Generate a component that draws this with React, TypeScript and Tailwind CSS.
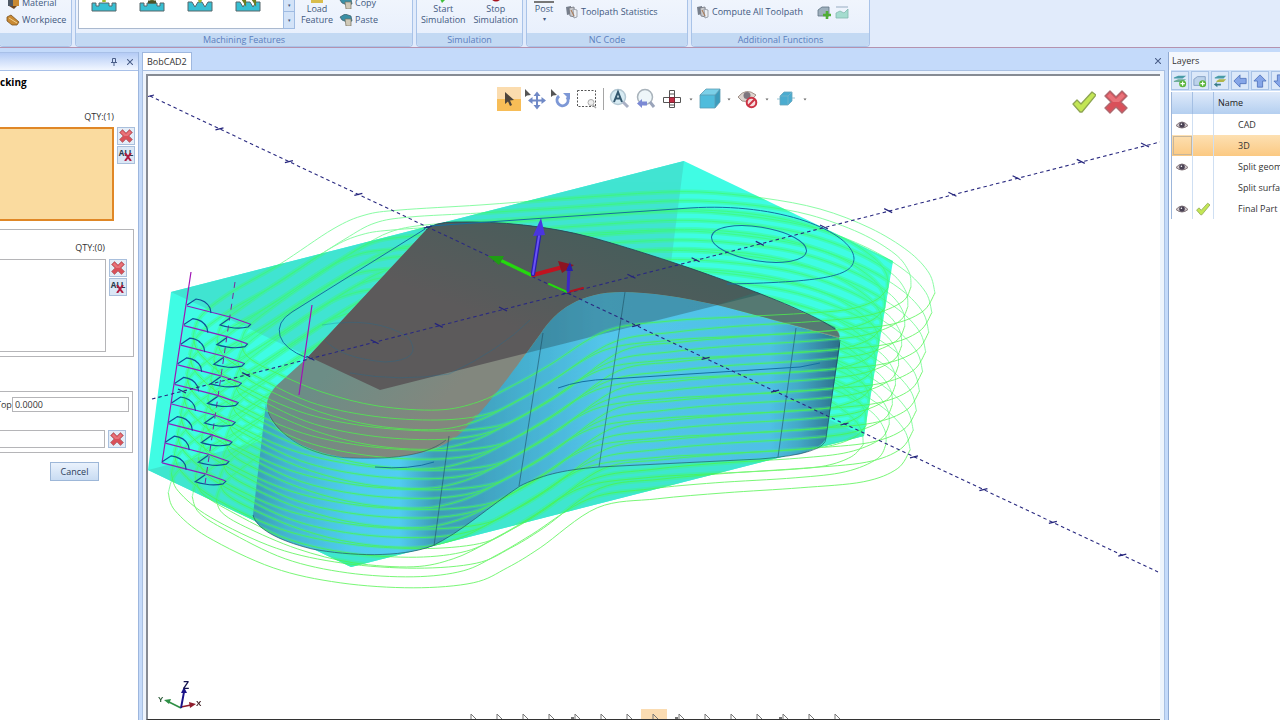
import React from 'react';

type Pt = [number, number];

interface Layer {
  name: string;
  visible: boolean;
  active: boolean;
  selected?: boolean;
}

const LAYERS: Layer[] = [
  { name: 'CAD', visible: true, active: false },
  { name: '3D', visible: false, active: false, selected: true },
  { name: 'Split geometry', visible: true, active: false },
  { name: 'Split surface', visible: false, active: false },
  { name: 'Final Part', visible: true, active: true },
];

// Profile passes at the top level, outermost first. Each has a far and a near half.
const PASSES: { back: Pt[]; front: Pt[] }[] = [
  {
    back: [[193, 336], [201, 316], [230, 293], [280, 264], [333, 229], [365, 215], [400, 210], [480, 205], [560, 199], [647, 193], [700, 192], [763, 198], [820, 209], [870, 228], [908, 251], [929, 273], [935, 293]],
    front: [[935, 293], [922, 312], [888, 325], [825, 331], [750, 336], [682, 342], [622, 351], [565, 391], [532, 411], [498, 426], [438, 431], [365, 426], [298, 411], [232, 380], [200, 354], [193, 336]],
  },
  {
    back: [[217, 340], [224, 322], [252, 300], [300, 268], [345, 239], [375, 223], [410, 217], [480, 213], [560, 208], [647, 202], [700, 201], [760, 206], [810, 215], [860, 233], [895, 254], [909, 272], [911, 287]],
    front: [[911, 287], [902, 302], [870, 315], [820, 321], [740, 326], [676, 332], [614, 342], [556, 378], [522, 398], [488, 414], [438, 420], [372, 416], [310, 402], [252, 374], [224, 356], [217, 340]],
  },
  {
    back: [[241, 343], [248, 327], [274, 306], [320, 274], [360, 248], [390, 232], [425, 225], [490, 221], [560, 216], [647, 211], [700, 210], [752, 214], [800, 223], [845, 239], [874, 258], [886, 273], [888, 288]],
    front: [[888, 288], [876, 300], [850, 309], [810, 313], [735, 317], [670, 321], [606, 331], [548, 366], [512, 386], [478, 402], [438, 410], [378, 406], [322, 392], [270, 370], [247, 356], [241, 343]],
  },
];

const LEVELS = Array.from({ length: 9 }, (_, i) => i);

// Catmull-Rom through the points, written as cubic segments
const smooth = (pts: Pt[]) => {
  let d = `M${pts[0][0]} ${pts[0][1]}`;
  for (let i = 0; i < pts.length - 1; i++) {
    const a = pts[i - 1] || pts[i];
    const b = pts[i];
    const c = pts[i + 1];
    const e = pts[i + 2] || c;
    d += ` C${b[0] + (c[0] - a[0]) / 6} ${b[1] + (c[1] - a[1]) / 6} ${c[0] - (e[0] - b[0]) / 6} ${c[1] - (e[1] - b[1]) / 6} ${c[0]} ${c[1]}`;
  }
  return d;
};

const STOCK = 'M684 161 L893 261 L864 436 L351 567 L148 470 L171 292 Z';
const PART_TOP =
  'M307 358 L426 230 Q434 222 455 222 C500 221 548 226 590 237 C660 256 800 304 835 329 Q841 333 839 338 C790 325 750 313 717 305 C680 297 650 292 622 292 C580 292 556 310 541 333 C520 362 490 404 462 432 C438 454 404 459 352 458 C314 455 284 439 272 421 C263 406 267 397 276 386 Z';
const PART_SIDE =
  'M266 403 C268 425 284 439 314 451 C346 462 404 459 436 449 C452 442 490 404 541 333 C556 310 580 292 622 292 C650 292 680 297 717 305 L839 338 L840 345 L826 438 Q822 448 800 454 C780 458 700 462 599 467 C560 470 540 476 520 486 C490 506 460 533 432 546 C400 558 350 556 312 549 C276 540 256 528 253 515 Z';

const Toolpaths: React.FC<{ half: 'back' | 'front' }> = ({ half }) => (
  <>
    {LEVELS.map((k) => (
      <g key={k} transform={`translate(${-3.1 * k} ${19.6 * k})`}>
        {PASSES.map((p, i) => (
          <path key={i} d={smooth(p[half])} />
        ))}
      </g>
    ))}
  </>
);

const AxisTicks: React.FC<{ from: Pt; step: Pt; count: number; dy: number }> = ({ from, step, count, dy }) => (
  <g stroke="#24247c" strokeWidth="1.2">
    {Array.from({ length: count }, (_, i) => {
      const x = from[0] + step[0] * i;
      const y = from[1] + step[1] * i;
      return <line key={i} x1={x - 4} y1={y - dy} x2={x + 4} y2={y + dy} />;
    })}
  </g>
);

const Viewport: React.FC = () => (
  <svg className="h-full w-full" viewBox="148 76 1012 643" role="img" aria-label="Part and toolpath view">
    <defs>
      <linearGradient id="side" gradientUnits="userSpaceOnUse" x1="252" y1="0" x2="840" y2="0">
        <stop offset="0" stopColor="#3a9cb4" />
        <stop offset="0.06" stopColor="#45b4d4" />
        <stop offset="0.17" stopColor="#50ccf0" />
        <stop offset="0.25" stopColor="#52cdf2" />
        <stop offset="0.31" stopColor="#3f9cb8" />
        <stop offset="0.37" stopColor="#3fa0bc" />
        <stop offset="0.48" stopColor="#48b3d4" />
        <stop offset="0.6" stopColor="#54c6ec" />
        <stop offset="0.88" stopColor="#50c0e6" />
        <stop offset="0.93" stopColor="#44a8c8" />
        <stop offset="1" stopColor="#2c6f88" />
      </linearGradient>
      <linearGradient id="top" gradientUnits="userSpaceOnUse" x1="560" y1="225" x2="520" y2="330">
        <stop offset="0" stopColor="#485d5b" />
        <stop offset="1" stopColor="#5c5a5b" />
      </linearGradient>
      <linearGradient id="lowTop" gradientUnits="userSpaceOnUse" x1="320" y1="380" x2="400" y2="450">
        <stop offset="0" stopColor="#6c8d86" />
        <stop offset="1" stopColor="#82877e" />
      </linearGradient>
      <clipPath id="stock"><path d={STOCK} /></clipPath>
      <clipPath id="partTop"><path d={PART_TOP} /></clipPath>
      <clipPath id="partSide"><path d={PART_SIDE} /></clipPath>
    </defs>

    {/* stock */}
    <path d={STOCK} fill="#40fce4" />
    <path d="M171 292 L684 161 L664 318 L380 390 Z" fill="#41e4d2" />
    <path d="M148 470 L661 339 L864 436 L351 567 Z" fill="#3fe6cf" />
    <g fill="none" stroke="#3dfb6a">
      <g strokeWidth="4.5" opacity="0.35" clipPath="url(#stock)">
        <Toolpaths half="back" />
        <Toolpaths half="front" />
      </g>
      <g strokeWidth="1" opacity="0.6">
        <Toolpaths half="back" />
      </g>
    </g>

    {/* part */}
    <path d={PART_SIDE} fill="url(#side)" />
    <path d="M380 390 L893 261 L700 200 L400 250 Z" fill="#2f5e6b" opacity="0.45" clipPath="url(#partSide)" />
    <path d={PART_TOP} fill="url(#lowTop)" />
    <path d="M171 292 L684 161 L893 261 L380 390 Z" fill="url(#top)" clipPath="url(#partTop)" />
    <path d="M757 292 L835 327 L840 337 L717 305 Z" fill="#37706a" opacity="0.6" />
    <g fill="none" stroke="#3cf58a" strokeWidth="3.5" opacity="0.3" clipPath="url(#partSide)">
      <Toolpaths half="front" />
    </g>
    <g fill="none" stroke="#4df54a" strokeWidth="1" opacity="0.75">
      <Toolpaths half="front" />
    </g>

    <g fill="none" stroke="#1b4a5c" strokeWidth="1" opacity="0.8">
      <path d="M449 436 L434 546 M543 333 L519 486 M625 292 L599 467 M796 328 L778 457" opacity="0.7" />
      <path d="M268 412 C278 436 310 457 352 458 C400 460 430 453 446 440" opacity="0.6" />
      <path d="M253 515 C256 528 276 540 312 549 C350 556 400 558 432 546 C460 533 490 506 520 486 C540 476 560 470 599 467 L760 459 Q826 454 826 438 L840 340" opacity="0.8" />
      <path d="M426 230 Q434 222 455 222 C500 221 548 226 590 237 C660 256 800 304 835 329" />
    </g>
    <g fill="none" stroke="#1470a0" strokeWidth="1">
      <path d="M425 229 L292 312 Q276 322 280 336 Q284 349 307 358" />
      <path d="M430 226 L690 208 C780 202 852 232 854 258 C854 274 834 282 727 284" />
      <ellipse cx="759" cy="244" rx="48" ry="17" transform="rotate(9 759 244)" />
      <path d="M375 467 Q410 470 434 462 M558 388 Q580 380 610 379 L800 367 L820 363" />
      <path d="M322 325 Q375 316 408 337 Q425 360 385 362 Q340 358 325 340 M350 373 Q400 382 449 374 Q500 350 530 320" opacity="0.3" />
    </g>

    {/* lead in / lead out moves */}
    <g fill="none" strokeWidth="1.2">
      <path d="M191 272 L162 463 M312 305 L299 395" stroke="#a014b4" />
      <path d="M235 282 L205 484" stroke="#7a2a9a" strokeWidth="1" strokeDasharray="6 5" />
      {LEVELS.map((i) => (
        <g key={i} transform={`translate(${-3.1 * i} ${19.6 * i})`}>
          <path d="M187 306 L230 317 L250 324" stroke="#8a1fc0" />
          <path d="M187 305 L196 299 Q206 300 210 308 L211 313 M230 318 L220 325 Q236 330 248 327 L251 324" stroke="#114f96" />
        </g>
      ))}
    </g>

    {/* world axes */}
    <g stroke="#2a2a80" strokeWidth="1.1" strokeDasharray="3.5 3">
      <line x1="150" y1="96" x2="1158" y2="572" />
      <line x1="152" y1="399" x2="1160" y2="142" />
    </g>
    <AxisTicks from={[150, 96]} step={[69.45, 32.8]} count={15} dy={-1} />
    <AxisTicks from={[182, 391]} step={[64.2, -16.4]} count={16} dy={2} />

    <g strokeLinecap="round">
      <line x1="531" y1="275" x2="502" y2="261" stroke="#25d80f" strokeWidth="3.5" />
      <path d="M488 256 L504 256 L499 265 Z" fill="#1f9d14" />
      <line x1="533" y1="275" x2="563" y2="267" stroke="#c01320" strokeWidth="4" />
      <path d="M574 265 L558 261 L562 273 Z" fill="#8e1420" />
      <line x1="533" y1="274" x2="539" y2="236" stroke="#2a1fb0" strokeWidth="4.500" />
      <line x1="533" y1="274" x2="539" y2="236" stroke="#6a52f5" strokeWidth="2" />
      <path d="M541 218 L533 236 L545 235 Z" fill="#4a35e0" />
      <line x1="567" y1="292" x2="549" y2="284" stroke="#25d80f" strokeWidth="2" />
      <line x1="568" y1="292" x2="583" y2="288" stroke="#b01320" strokeWidth="2" />
      <line x1="568" y1="291" x2="569" y2="268" stroke="#3b27c8" strokeWidth="3" />
      <path d="M570 262 L566 271 L573 271 Z" fill="#2a1fa8" />
    </g>

    {/* view triad */}
    <g strokeWidth="1.6">
      <line x1="181" y1="708" x2="167" y2="701" stroke="#2f8f46" />
      <path d="M164 700 L171 699 L169 704 Z" fill="#2f8f46" />
      <line x1="181" y1="707" x2="191" y2="705" stroke="#8f1c2c" />
      <path d="M196 704 L189 702 L190 708 Z" fill="#8f1c2c" />
      <line x1="181" y1="708" x2="184" y2="692" stroke="#1a1288" strokeWidth="2" />
      <path d="M184 687 L181 693 L187 693 Z" fill="#1a1288" />
    </g>
    <g fontFamily="Liberation Sans, sans-serif" fontWeight="700">
      <text x="183" y="689" fontSize="10" fill="#141450">Z</text>
      <text x="158" y="702" fontSize="8" fill="#2c5a38">Y</text>
      <text x="196" y="706" fontSize="8" fill="#3c1c20">X</text>
    </g>
  </svg>
);

const RedX: React.FC<{ className?: string }> = ({ className = 'size-3.5' }) => (
  <svg viewBox="0 0 24 24" className={className}>
    <path d="M6 1 L12 7 L18 1 L23 6 L17 12 L23 18 L18 23 L12 17 L6 23 L1 18 L7 12 L1 6 Z" fill="#d9505a" stroke="#ad6a70" strokeWidth="1.4" strokeLinejoin="round" />
    <path d="M6 3 L12 9 L18 3 L21 6 L15 12 H9 L3 6 Z" fill="#ee8288" opacity="0.7" />
  </svg>
);

const Check: React.FC<{ className?: string }> = ({ className = 'size-3.5' }) => (
  <svg viewBox="0 0 24 24" className={className}>
    <path d="M1 14 L5 10 L9 14 L20 2 L24 5 L10 22 H8 Z" fill="#c3e655" stroke="#8ea552" strokeWidth="1.3" strokeLinejoin="round" />
  </svg>
);

const Eye: React.FC = () => (
  <svg viewBox="0 0 14 10" className="h-2.5 w-3.5">
    <path d="M1 5.500 Q7 -1.500 13 5.500 Q7 10.500 1 5.500 Z" fill="#cfc6ca" stroke="#85777c" />
    <circle cx="7" cy="5" r="2.8" fill="#4a4254" />
    <circle cx="6.400" cy="4.200" r="0.8" fill="#fff" />
  </svg>
);

const RemoveButton: React.FC = () => (
  <button aria-label="Remove" className="flex size-[18px] items-center justify-center border border-[#a9bfdc] bg-[#e4edf8]">
    <RedX />
  </button>
);

const RemoveAllButton: React.FC = () => (
  <button aria-label="Remove all" className="relative flex size-[18px] justify-center border border-[#a9bfdc] bg-[#dbe7f5] text-[8px] leading-[11px] font-bold text-[#2a3a4c]">
    ALL
    <svg viewBox="0 0 8 8" className="absolute right-0.5 bottom-0.5 size-2">
      <path d="M1 0 L7 8 M7 0 L1 8" stroke="#b01c40" strokeWidth="2" />
    </svg>
  </button>
);

const SheetsIcon: React.FC = () => (
  <svg viewBox="0 0 14 14" className="size-3.5 shrink-0">
    <path d="M1 2 L6 1 V9 L2 10 Z" fill="#777f8c" />
    <path d="M4 3 L9 2 L10 12 L5 11 Z" fill="#c9c9cc" stroke="#70747c" strokeWidth="0.8" />
    <path d="M8 4 L12 5 L12 12 L9 13 Z" fill="#eceef2" stroke="#8d939c" strokeWidth="0.8" />
    <path d="M6 5 L9 11" stroke="#a8744c" />
  </svg>
);

const PasteIcon: React.FC = () => (
  <svg viewBox="0 0 14 12" className="h-3 w-3.5 shrink-0">
    <path d="M1 3 L6 0 L12 2 L13 7 L8 8 L3 6 Z" fill="#3a8fa5" stroke="#3b5a66" strokeWidth="0.7" />
    <path d="M6 5 H12 V12 H7 Z" fill="#cfc9b8" stroke="#75705f" strokeWidth="0.7" />
  </svg>
);

const WorkIcon: React.FC = () => (
  <svg viewBox="0 0 14 12" className="h-3 w-3.5 shrink-0">
    <path d="M1 3 L5 1 L13 8 L11 11 L6 11 L1 7 Z" fill="#c98a34" stroke="#7a5220" strokeWidth="0.8" />
    <path d="M3 4 L11 9" stroke="#f1cf8e" />
  </svg>
);

const MaterialIcon: React.FC = () => (
  <svg viewBox="0 0 14 12" className="h-3 w-3.5 shrink-0">
    <rect x="2" y="2" width="6" height="7" fill="#4e5866" />
    <rect x="7" y="3" width="6" height="6" fill="#c98a34" />
    <path d="M3 9 H11 L8 12 Z" fill="#6d4624" />
  </svg>
);

const FeatureIcon: React.FC<{ kind: number }> = ({ kind }) => (
  <svg viewBox="0 0 26 24" className="h-6 w-[26px]">
    <path
      d={kind > 1 ? 'M1 14 H5 L8 19 L11 14 H15 L18 19 L21 14 H25 V23 H1 Z' : 'M1 15 H5 V18 H8 V15 H18 V18 H21 V15 H25 V23 H1 Z'}
      fill="#36bfd3"
      stroke="#56666a"
    />
    {kind === 3 ? (
      <path d="M8 0 V12 L10 15 V6 M18 0 V12 L20 15 V4" stroke="#6c7c20" strokeWidth="2.2" fill="none" />
    ) : (
      <path d={kind === 2 ? 'M13 0 V8 M11 9 L13 12 L15 9 Z' : 'M13 0 V14'} stroke={kind === 1 ? '#75803a' : '#a0b82a'} strokeWidth="3.5" />
    )}
    {kind === 1 && <path d="M9 14 H17" stroke="#4c5228" strokeWidth="3" />}
  </svg>
);

const RibbonGroup: React.FC<{ label: string; className: string; children: React.ReactNode }> = ({ label, className, children }) => (
  <section className={`flex shrink-0 flex-col overflow-hidden rounded-b-sm border-x border-b border-[#a9c3e8] bg-linear-to-b from-[#f0f5fd] to-[#e6eefc] ${className}`}>
    <div className="flex h-[33px] items-end justify-between overflow-hidden">{children}</div>
    <h2 className="flex h-[13px] items-center justify-center bg-[#c3d9f3] text-[#5b7fbe]">{label}</h2>
  </section>
);

const Ribbon: React.FC = () => (
  <header className="flex h-12 shrink-0 gap-[3px] overflow-hidden border-b border-[#b592ae] bg-[#e1ebfb] text-[#42597f]">
    <RibbonGroup label="" className="-ml-px w-[73px]">
      <div className="flex flex-col items-start gap-[3px] pb-[6px] pl-1.5">
        <button className="flex h-3.5 items-center gap-0.5"><MaterialIcon />Material</button>
        <button className="flex h-3.5 items-center gap-0.5"><WorkIcon />Workpiece</button>
      </div>
    </RibbonGroup>
    <RibbonGroup label="Machining Features" className="w-[338px]">
      <div className="flex h-full pb-1 pl-0.5">
        <div className="flex w-[205px] items-start gap-[22px] border-b border-l border-[#aab9cf] bg-white pl-3">
          {[0, 1, 2, 3].map((k) => (
            <button key={k} aria-label={`Feature ${k + 1}`} className="-mt-3"><FeatureIcon kind={k} /></button>
          ))}
        </div>
        <div className="flex w-3 flex-col border border-t-0 border-[#9fbbe2] bg-[#d3e3f8] text-[5px] leading-none">
          <button aria-label="Next row" className="h-3 border-b border-[#9fbbe2]">▾</button>
          <button aria-label="More features" className="flex-1">▾</button>
        </div>
      </div>
      <button className="flex flex-col pb-2 text-center leading-[11px]">
        <span className="mx-auto h-1 w-3 bg-[#d9bd4c]" />
        <span>Load</span>
        <span>Feature</span>
      </button>
      <div className="flex flex-col items-start gap-[3px] pr-[34px] pb-1.5">
        <button className="flex h-3.5 items-center gap-0.5"><PasteIcon />Copy</button>
        <button className="flex h-3.5 items-center gap-0.5"><PasteIcon />Paste</button>
      </div>
    </RibbonGroup>
    <RibbonGroup label="Simulation" className="w-[107px]">
      <button className="flex flex-1 flex-col items-center pb-2 leading-[11px]">
        <svg viewBox="0 0 8 4" className="h-1 w-2"><path d="M1 0 H7 L3 4 Z" fill="#3fbf3a" /></svg>
        Start<span>Simulation</span>
      </button>
      <button className="flex flex-1 flex-col items-center pb-2 leading-[11px]">
        <svg viewBox="0 0 10 4" className="h-1 w-2.5"><path d="M0 0 H10 Q5 5 0 0 Z" fill="#a5121e" /></svg>
        Stop<span>Simulation</span>
      </button>
    </RibbonGroup>
    <RibbonGroup label="NC Code" className="w-[162px]">
      <button className="flex w-[34px] flex-col items-center pb-2 leading-[11px]">
        <span className="h-0.5 w-5 bg-[#777]" />
        Post<span className="text-[6px]">▾</span>
      </button>
      <button className="mr-auto flex items-center gap-0.5 pb-3.5 pl-1"><SheetsIcon />Toolpath Statistics</button>
    </RibbonGroup>
    <RibbonGroup label="Additional Functions" className="w-[179px]">
      <button className="flex items-center gap-0.5 pb-3.5 pl-1"><SheetsIcon />Compute All Toolpath</button>
      <div className="flex gap-1 pr-5 pb-3.5">
        <button aria-label="Add toolpath">
          <svg viewBox="0 0 14 14" className="size-3.5">
            <path d="M1 5 L5 2 H12 V11 H1 Z" fill="#9eb0bd" stroke="#607483" strokeWidth="0.8" />
            <path d="M10 6 V14 M6 10 H14" stroke="#4fae35" strokeWidth="2.6" />
          </svg>
        </button>
        <button aria-label="Report">
          <svg viewBox="0 0 14 14" className="size-3.5">
            <path d="M1 2 H13" stroke="#98adc2" />
            <path d="M1 13 V8 L5 6 L9 8 L13 4 V13 Z" fill="#a4dccf" stroke="#84b8ae" strokeWidth="0.8" />
          </svg>
        </button>
      </div>
    </RibbonGroup>
  </header>
);

const ParameterPanel: React.FC = () => (
  <aside className="flex w-[139px] shrink-0 flex-col overflow-hidden border-r border-[#9db6dd] bg-white text-[#333]">
    <div className="flex h-[19px] shrink-0 items-center justify-end gap-1 border-t border-b border-[#a8c0e8] bg-linear-to-b from-[#b4cbf5] to-[#f2f7ff] pr-0.5 text-[#4a5e88]">
      <button aria-label="Pin" className="flex size-3 items-center justify-center">
        <svg viewBox="0 0 8 8" className="size-2" fill="none" stroke="currentColor">
          <path d="M2.500 0.500 H5.500 V4.500 H2.500 Z M1 4.500 H7 M4 4.500 V8" />
        </svg>
      </button>
      <button aria-label="Close panel" className="flex size-3 items-center justify-center">
        <svg viewBox="0 0 8 8" className="size-1.5" stroke="currentColor" strokeWidth="1.4"><path d="M0 0 L8 8 M8 0 L0 8" /></svg>
      </button>
    </div>
    <h1 className="mt-1 text-[10px] leading-3.5 font-bold text-black">cking</h1>
    <p className="mt-[22px] pr-6 text-right leading-3">QTY:(1)</p>
    <div className="mt-1 flex gap-[3px]">
      <div className="h-[94px] w-[114px] border-2 border-l-0 border-[#e08726] bg-[#fadb9f]" />
      <div className="flex flex-col gap-px">
        <RemoveButton />
        <RemoveAllButton />
      </div>
    </div>
    <section className="mt-2 mr-1 h-[128px] border border-l-0 border-[#b5b5b8]">
      <p className="mt-3 pr-[28px] text-right leading-3">QTY:(0)</p>
      <div className="mt-[5px] flex gap-[3px]">
        <div className="h-[93px] w-[106px] border border-l-0 border-[#b5b5b8]" />
        <div className="flex flex-col gap-px">
          <RemoveButton />
          <RemoveAllButton />
        </div>
      </div>
    </section>
    <section className="mt-[34px] mr-[5px] h-[62px] border border-l-0 border-[#b5b5b8] pr-[3px]">
      <label className="mt-[5px] flex h-[15px] items-center">
        <span className="-ml-1">Top</span>
        <input type="text" defaultValue="0.0000" className="h-[15px] w-0 min-w-0 flex-1 border border-[#b5b5b8] px-0.5" />
      </label>
      <div className="mt-[18px] flex gap-[3px]">
        <input type="text" aria-label="Bottom geometry" className="h-[18px] w-[105px] border border-l-0 border-[#b5b5b8]" />
        <RemoveButton />
      </div>
    </section>
    <button className="mt-[9px] mr-[39px] h-[19px] w-[49px] self-end border border-[#9db7d8] bg-linear-to-b from-[#eaf2fc] to-[#c9dcf3] text-[#2c3c58]">Cancel</button>
  </aside>
);

const Tool: React.FC<{ label: string; active?: boolean; children: React.ReactNode }> = ({ label, active, children }) => (
  <button aria-label={label} className={`flex size-6 items-center justify-center ${active ? 'bg-linear-to-b from-[#fbdcae] from-50% to-[#f7bd57] to-50%' : ''}`}>
    <svg viewBox="0 0 24 24" className="size-6" fill="none">{children}</svg>
  </button>
);

const Drop: React.FC<{ label: string }> = ({ label }) => (
  <button aria-label={label} className="flex h-6 w-2.5 items-center justify-center">
    <svg viewBox="0 0 4 3" className="h-[3px] w-1"><path d="M0.500 0.500 H3.500 L2 2.500 Z" fill="#666" /></svg>
  </button>
);

const ViewToolbar: React.FC = () => (
  <div className="absolute inset-x-0 top-[11px] flex justify-center gap-0.5 pr-0.5">
    <Tool label="Select" active>
      <path d="M8 5 L8 17 L11 14.500 L13 19 L15 18 L13 13.500 L17 13 Z" fill="#4d443c" />
    </Tool>
    <Tool label="Pan">
      <path d="M2 2 L2 10 L4 8.500 L8 8 Z" fill="#555" />
      <path d="M14 7 V20 M7.500 13.500 H20.500" stroke="#7089c6" strokeWidth="2" />
      <path d="M14 4.500 L17.500 9 H10.500 Z M14 22.500 L17.500 18 H10.500 Z M5 13.500 L9.500 10 V17 Z M23 13.500 L18.500 10 V17 Z" fill="#7089c6" />
    </Tool>
    <Tool label="Rotate">
      <path d="M2 2 L2 10 L4 8.500 L8 8 Z" fill="#555" />
      <path d="M10 9 A5.500 5.500 0 1 0 18 10" stroke="#7d98d6" strokeWidth="3" />
      <path d="M14 6 H21 V13 Z" fill="#7d98d6" />
    </Tool>
    <Tool label="Window select">
      <rect x="2.500" y="3.500" width="18" height="16" stroke="#555" strokeDasharray="2 1.500" />
      <circle cx="16" cy="15.500" r="3" stroke="#aaa" fill="#eee" />
      <path d="M18 18 L21 21" stroke="#aaa" strokeWidth="1.500" />
    </Tool>
    <span className="mx-0.5 h-[22px] w-px self-center bg-[#a5a5a5]" />
    <Tool label="Zoom all">
      <circle cx="10" cy="10" r="7.500" fill="#d7ebf3" stroke="#b5c9d4" strokeWidth="1.500" />
      <path d="M15 15 L20 20" stroke="#a9b0c4" strokeWidth="3" />
      <path d="M6 15 L10 5 L14 15 M7.500 11.500 H12.500" stroke="#33576e" strokeWidth="2" />
    </Tool>
    <Tool label="Zoom previous">
      <circle cx="11" cy="10" r="7.500" fill="#eef6f9" stroke="#a9b3bb" strokeWidth="1.500" />
      <path d="M16 15 L20 20" stroke="#9aa4ba" strokeWidth="3" />
      <path d="M3 16.500 L8 12 V14.500 H13 V18.500 H8 V21 Z" fill="#7b89d4" />
    </Tool>
    <Tool label="Standard views">
      <path d="M9.500 3.500 H14.500 V20.500 H9.500 Z M3.500 10.500 H20.500 V15.500 H3.500 Z" stroke="#555" fill="#fff" />
      <rect x="9.500" y="10.500" width="5" height="5" fill="#c22d45" stroke="#7b2634" />
      <path d="M9.500 7 H14.500 M9.500 18 H14.500" stroke="#555" />
    </Tool>
    <Drop label="Standard views menu" />
    <Tool label="Shading">
      <path d="M2 8 L8 2 H22 L17 8 Z" fill="#7bd0e8" />
      <path d="M2 8 H17 V21 H2 Z" fill="#4fbcdc" />
      <path d="M17 8 L22 2 V15 L17 21 Z" fill="#3c9cbc" />
      <path d="M2 8 L8 2 H22 V15 L17 21 H2 Z M2 8 H17 V21 M17 8 L22 2" stroke="#5a9cb4" strokeWidth="0.8" />
    </Tool>
    <Drop label="Shading menu" />
    <Tool label="Hide">
      <path d="M2 10 Q10 0 20 8 Q14 16 6 14 Z" fill="#ddd4cf" stroke="#a09088" />
      <circle cx="11" cy="8.500" r="3.500" fill="#7d767e" />
      <circle cx="15.500" cy="15.500" r="4.800" stroke="#cc3344" strokeWidth="2" fill="#f6dede" />
      <path d="M12 19 L19 12" stroke="#cc3344" strokeWidth="2" />
    </Tool>
    <Drop label="Hide menu" />
    <Tool label="Clipping">
      <path d="M6 9 L10 5 H18 V14 L14 18 H6 Z" fill="#4bacd0" stroke="#6aa5bb" strokeWidth="0.8" />
      <path d="M6 9 H14 L18 5 M14 9 V18 M3 12 H6 M18 11 H21" stroke="#7ab5ca" strokeWidth="0.8" />
    </Tool>
    <Drop label="Clipping menu" />
  </div>
);

const SnapBar: React.FC = () => (
  <div className="absolute inset-x-0 bottom-0 flex h-2.5 justify-center">
    {Array.from({ length: 15 }, (_, i) => (
      <button key={i} aria-label={`Snap ${i + 1}`} className={`flex w-[26px] items-end justify-center ${i === 7 ? 'bg-[#fbdcb2]' : ''}`}>
        <svg viewBox="0 0 12 5" className="h-[5px] w-3" fill="none" stroke="#777">
          <path d="M5 5 V0 L10 5" />
          {i % 4 === 0 && i > 0 && <path d="M1 4 H4" stroke="#444" strokeWidth="1.500" />}
        </svg>
      </button>
    ))}
  </div>
);

const DocumentArea: React.FC = () => (
  <main className="ml-[3px] flex min-w-0 flex-1 flex-col">
    <div className="flex h-[18px] shrink-0 items-center justify-between pr-px">
      <button className="h-[18px] border border-b-0 border-[#9fb8df] bg-white px-1 text-[#333]">BobCAD2</button>
      <button aria-label="Close document" className="flex size-3 items-center justify-center text-[#4a5e88]">
        <svg viewBox="0 0 8 8" className="size-1.5" stroke="currentColor" strokeWidth="1.4"><path d="M0 0 L8 8 M8 0 L0 8" /></svg>
      </button>
    </div>
    <div className="flex min-h-0 flex-1 border-t border-r border-l border-[#a9c0e2] bg-[#eef4fc] pt-[3px] pr-1 pl-[3px]">
      <div className="relative min-h-0 min-w-0 flex-1 overflow-hidden border-t-2 border-b border-l-2 border-[#868b94] border-b-[#333] bg-white">
        <Viewport />
        <ViewToolbar />
        <div className="absolute top-3.5 right-8 flex gap-2">
          <button aria-label="Accept"><Check className="size-6" /></button>
          <button aria-label="Reject"><RedX className="size-6" /></button>
        </div>
        <SnapBar />
      </div>
    </div>
  </main>
);

const LayerTool: React.FC<{ label: string; children: React.ReactNode }> = ({ label, children }) => (
  <button aria-label={label} className="flex h-[19px] w-[18px] shrink-0 items-center justify-center border border-[#a9c3e6] bg-[#dbe8f9]">
    <svg viewBox="0 0 16 16" className="size-3.5">{children}</svg>
  </button>
);

const LayersPanel: React.FC = () => (
  <aside className="ml-[3px] flex w-[112px] shrink-0 flex-col overflow-hidden border-l border-[#8fa9d2] bg-white pl-0.5 text-[#333]">
    <h2 className="-ml-0.5 flex h-[18px] shrink-0 items-center bg-[#f4f7fd] pl-[3px]">Layers</h2>
    <div className="flex h-[21px] shrink-0 items-center gap-0.5 bg-[#cfe0f7]">
      <LayerTool label="New layer">
        <path d="M1 4 L6 2 H15 L11 5 H1 Z" fill="#4a9ca8" /><path d="M1 8 L6 6 H15 L11 9 H1 Z" fill="#6fae9c" />
        <circle cx="11" cy="11" r="4" fill="#5cb53c" /><path d="M11 8.500 V13.500 M8.500 11 H13.500" stroke="#fff" strokeWidth="1.400" />
      </LayerTool>
      <LayerTool label="New folder">
        <path d="M1 6 L5 3 H14 V13 H1 Z" fill="#bcd2ea" stroke="#7f9cc2" />
        <circle cx="11" cy="11" r="4" fill="#5cb53c" /><path d="M11 8.500 V13.500 M8.500 11 H13.500" stroke="#fff" strokeWidth="1.400" />
      </LayerTool>
      <LayerTool label="Move to layer">
        <path d="M2 4 L6 2 H15 L12 5 H2 Z" fill="#4a9ca8" /><path d="M4 8 L7 6 H15 L12 9 H4 Z" fill="#b0b64a" />
        <path d="M9 11 H4 L5 9 L1 12 L5 15 V13 H9 Z" fill="#3a7d8c" />
      </LayerTool>
      <LayerTool label="Left"><path d="M1 8 L8 1 V5 H15 V11 H8 V15 Z" fill="#86a6e8" stroke="#5275bd" /></LayerTool>
      <LayerTool label="Up"><path d="M8 1 L15 8 H11 V15 H5 V8 H1 Z" fill="#86a6e8" stroke="#5275bd" /></LayerTool>
      <LayerTool label="Down"><path d="M8 15 L15 8 H11 V1 H5 V8 H1 Z" fill="#86a6e8" stroke="#5275bd" /></LayerTool>
    </div>
    <table className="mt-px w-40 table-fixed border-collapse border-l border-[#9db6da] text-left">
      <colgroup>
        <col className="w-[21px]" />
        <col className="w-[21px]" />
        <col />
      </colgroup>
      <thead>
        <tr className="h-[22px] bg-linear-to-b from-[#dfeafa] to-[#b4cff0]">
          <th className="border-r border-[#a4bfe3]" />
          <th className="border-r border-[#a4bfe3]" />
          <th className="pl-1 font-normal text-[#222]">Name</th>
        </tr>
      </thead>
      <tbody>
        {LAYERS.map((layer) => (
          <tr key={layer.name} className={`h-[21px] ${layer.selected ? 'bg-linear-to-b from-[#fde0b2] to-[#fbc982]' : ''}`}>
            <td className={`border-r border-[#cfdff2] p-0 pl-[3px] ${layer.selected ? 'outline -outline-offset-2 outline-[#c8b69a]' : ''}`}>{layer.visible && <Eye />}</td>
            <td className="border-r border-[#cfdff2] p-0 pl-[3px]">{layer.active && <Check />}</td>
            <td className="p-0 pl-6 whitespace-nowrap">{layer.name}</td>
          </tr>
        ))}
      </tbody>
    </table>
  </aside>
);

const App: React.FC = () => {
  return (
    <div className="flex h-screen flex-col overflow-hidden bg-[#c4dafa] font-['Open_Sans',sans-serif] text-[9px]">
      <Ribbon />
      <div className="mt-1 flex min-h-0 flex-1">
        <ParameterPanel />
        <DocumentArea />
        <LayersPanel />
      </div>
    </div>
  );
};

export default App;
